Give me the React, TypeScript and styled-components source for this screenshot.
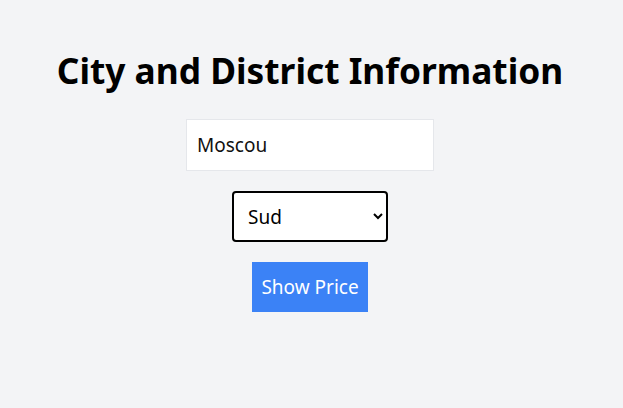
import React, { useState } from 'react';
import styled, { createGlobalStyle } from 'styled-components';

const GlobalStyle = createGlobalStyle`
    html, body {
        margin: 0;
        padding: 0;
        background: #f3f4f6;
    }
    body {
        font-family: "Noto Sans", "Open Sans", sans-serif;
        color: #000;
    }
`

const Page = styled.div`
    display: flex;
    flex-direction: column;
    align-items: center;
    padding: 44px 3px 0 0;
    min-height: 408px;
    box-sizing: border-box;
`

const Heading = styled.h1`
    margin: 0 0 23px 0;
    font-size: 35.3px;
    line-height: 52px;
    font-weight: 700;
`

const CityInput = styled.input`
    box-sizing: border-box;
    width: 248px;
    height: 52px;
    padding: 0 10px;
    border: 1px solid #e5e7eb;
    background: #fff;
    font-family: inherit;
    font-size: 19px;
    color: #111;
    outline: none;
`

const DistrictSelect = styled.select`
    box-sizing: border-box;
    width: 156px;
    height: 51px;
    margin-top: 20px;
    padding: 0 10px;
    border: 2px solid #000;
    border-radius: 4px;
    background: #fff;
    font-family: inherit;
    font-size: 19px;
    color: #000;
`

const PriceButton = styled.button`
    box-sizing: border-box;
    width: 116px;
    height: 50px;
    margin-top: 20px;
    border: none;
    background: #3b82f6;
    color: #fff;
    font-family: inherit;
    font-size: 19px;
    cursor: pointer;
`

function App(): JSX.Element {
    const [city, setCity] = useState("Moscou");
    const [district, setDistrict] = useState("Sud");

    return (
        <Page>
            <GlobalStyle />
            <Heading>City and District Information</Heading>
            <CityInput type="text" value={city} onChange={e => setCity(e.target.value)} />
            <DistrictSelect value={district} onChange={e => setDistrict(e.target.value)}>
                <option value="Nord">Nord</option>
                <option value="Sud">Sud</option>
                <option value="Est">Est</option>
                <option value="Ouest">Ouest</option>
            </DistrictSelect>
            <PriceButton>Show Price</PriceButton>
        </Page>
    )
}

export default App
